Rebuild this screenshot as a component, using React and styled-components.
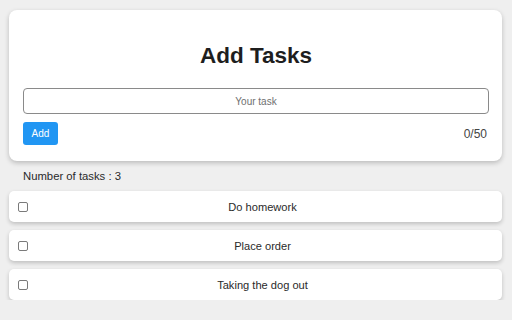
import React from "react";
import styled, { createGlobalStyle } from "styled-components";

const Global = createGlobalStyle`
  html, body { margin: 0; padding: 0; background: #efefef; }
  body { font-family: "Liberation Sans", Arial, sans-serif; }
`;

const Page = styled.div`
  padding: 10px 10px 0 9px;
`;

const Card = styled.div`
  background: #fff;
  border-radius: 8px;
  box-shadow: 0 2px 5px rgba(0, 0, 0, 0.22);
  padding: 0 13px 16px 14px;
  display: flex;
  flex-direction: column;
`;

const Title = styled.h1`
  margin: 33px 0 19px;
  font-size: 22.5px;
  line-height: 26px;
  font-weight: bold;
  text-align: center;
  color: #1e1e1e;
`;

const Input = styled.input`
  box-sizing: border-box;
  width: 100%;
  height: 26px;
  border: 1px solid #8a8a8a;
  border-radius: 4px;
  text-align: center;
  font-family: "Liberation Sans", Arial, sans-serif;
  font-size: 10px;
  outline: none;
  &::placeholder { color: #6f6f6f; }
`;

const Controls = styled.div`
  margin-top: 8px;
  display: flex;
  align-items: center;
  justify-content: space-between;
`;

const AddButton = styled.button`
  width: 35px;
  height: 23px;
  border: none;
  border-radius: 3px;
  background: #2196f3;
  color: #fff;
  font-family: "Liberation Sans", Arial, sans-serif;
  font-size: 10px;
  padding: 0;
`;

const Counter = styled.span`
  font-size: 12px;
  color: #444;
  margin-right: 2px;
`;

const Count = styled.div`
  margin: 8px 0 8px 14px;
  font-size: 11.3px;
  line-height: 14px;
  color: #2a2a2a;
`;

const List = styled.div`
  display: flex;
  flex-direction: column;
  gap: 8px;
`;

const Row = styled.div`
  height: 31px;
  background: #fff;
  border-radius: 5px;
  box-shadow: 0 2px 4px rgba(0, 0, 0, 0.2);
  display: flex;
  align-items: center;
  padding: 0 5px 0 9px;
`;

const Check = styled.input`
  appearance: none;
  margin: 0;
  width: 10px;
  height: 10px;
  border: 1px solid #7a7a7a;
  border-radius: 2px;
  background: #fff;
  box-sizing: border-box;
`;

const TaskText = styled.span`
  flex: 1;
  text-align: center;
  font-size: 11.1px;
  color: #2a2a2a;
`;

const tasks = ["Do homework", "Place order", "Taking the dog out"];

export default function App() {
  return (
    <>
      <Global />
      <Page>
        <Card>
          <Title>Add Tasks</Title>
          <Input placeholder="Your task" />
          <Controls>
            <AddButton>Add</AddButton>
            <Counter>0/50</Counter>
          </Controls>
        </Card>
        <Count>Number of tasks : {tasks.length}</Count>
        <List>
          {tasks.map((t) => (
            <Row key={t}>
              <Check type="checkbox" />
              <TaskText>{t}</TaskText>
            </Row>
          ))}
        </List>
      </Page>
    </>
  );
}
